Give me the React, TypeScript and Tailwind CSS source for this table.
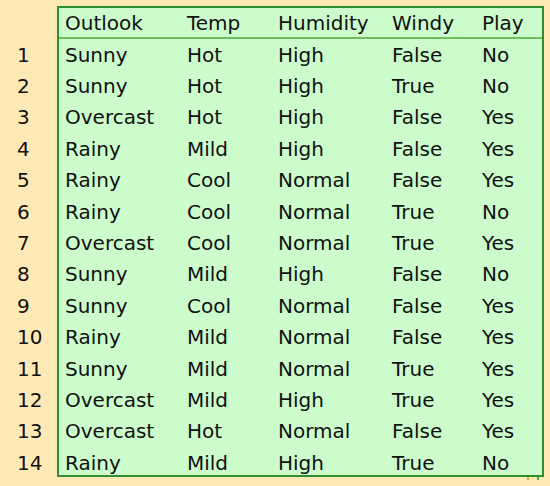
const rows = [
  ["Sunny", "Hot", "High", "False", "No"],
  ["Sunny", "Hot", "High", "True", "No"],
  ["Overcast", "Hot", "High", "False", "Yes"],
  ["Rainy", "Mild", "High", "False", "Yes"],
  ["Rainy", "Cool", "Normal", "False", "Yes"],
  ["Rainy", "Cool", "Normal", "True", "No"],
  ["Overcast", "Cool", "Normal", "True", "Yes"],
  ["Sunny", "Mild", "High", "False", "No"],
  ["Sunny", "Cool", "Normal", "False", "Yes"],
  ["Rainy", "Mild", "Normal", "False", "Yes"],
  ["Sunny", "Mild", "Normal", "True", "Yes"],
  ["Overcast", "Mild", "High", "True", "Yes"],
  ["Overcast", "Hot", "Normal", "False", "Yes"],
  ["Rainy", "Mild", "High", "True", "No"],
];

const headers = ["Outlook", "Temp", "Humidity", "Windy", "Play"];
const colWidths = ["w-[122px]", "w-[91px]", "w-[114px]", "w-[90px]", "flex-1"];

export default function App() {
  return (
    <div
      className="w-[550px] h-[486px] bg-[#fde9b6] text-[20px] text-[#111] overflow-hidden"
      style={{ fontFamily: '"DejaVu Sans", Verdana, sans-serif' }}
    >
      <div className="flex pt-[6px]">
        {/* row numbers */}
        <div className="w-[57px] pt-[33px] pl-[17px]">
          {rows.map((_, i) => (
            <div key={i} className="h-[31.4px] flex items-center leading-none">
              {i + 1}
            </div>
          ))}
        </div>

        <div className="flex flex-col">
          <div className="w-[487px] h-[471px] overflow-hidden border-2 border-[#2f8f2f] bg-[#ccfccc]">
            <div className="flex h-[31px] items-center pl-[6px] pt-[1px] border-b-2 border-[#6cbf5c] leading-none">
              {headers.map((h, j) => (
                <div key={h} className={colWidths[j]}>
                  {h}
                </div>
              ))}
            </div>
            {rows.map((r, i) => (
              <div key={i} className="flex h-[31.4px] shrink-0 items-center pl-[6px] leading-none">
                {r.map((c, j) => (
                  <div key={j} className={colWidths[j]}>
                    {c}
                  </div>
                ))}
              </div>
            ))}
          </div>
          <div className="flex gap-[8px] pl-[470px]">
            <div className="w-[2px] h-[3px] bg-[#d9b13a]" />
            <div className="w-[2px] h-[3px] bg-[#4caf50]" />
          </div>
        </div>
      </div>
    </div>
  );
}
